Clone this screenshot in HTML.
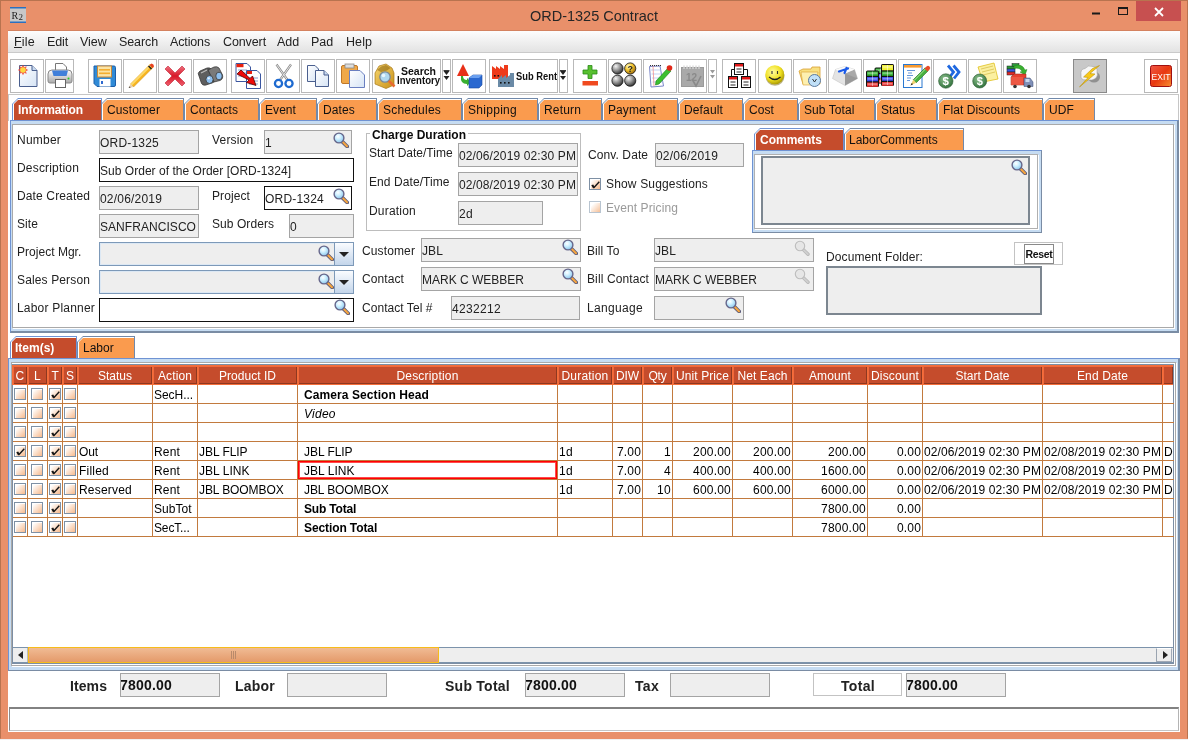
<!DOCTYPE html>
<html><head><meta charset="utf-8">
<style>
*{margin:0;padding:0;box-sizing:border-box}
html,body{width:1188px;height:740px;overflow:hidden;background:#f0f0f0}
body{position:relative;font-family:"Liberation Sans",sans-serif;font-size:12px;color:#222}
div,span{position:absolute}
.win{left:0;top:0;width:1188px;height:739px;background:#e9906a;border:1px solid #b8734f;border-bottom-color:#e9906a}
.title{left:0;top:8px;width:1188px;text-align:center;font-size:14.5px;color:#262626;white-space:nowrap}
.menubar{left:8px;top:30px;width:1172px;height:23px;background:linear-gradient(#fdfdfd,#e3e3e3);border-top:1px solid #d4825f;border-bottom:1px solid #cacaca}
.menu{top:35px;font-size:12.5px;color:#222;white-space:nowrap}
.tb{top:59px;height:34px;border:1px solid #b9b9b9;background:#fff}
.tb svg{position:absolute;left:0;top:0}
.tab{top:98px;height:22px;background:#7189aa;clip-path:polygon(0 6px,6px 0,100% 0,100% 100%,0 100%)}
.tab .i{left:1px;top:1px;right:1px;bottom:0;background:#fff;clip-path:polygon(0 5px,5px 0,100% 0,100% 100%,0 100%)}
.tab .f{left:1px;top:1px;right:0;bottom:0;background:#fa9b4e;clip-path:polygon(0 4px,4px 0,100% 0,100% 100%,0 100%)}
.tab .t{left:4px;top:5px;font-size:12px;color:#111;white-space:nowrap}
.tab.sel{background:#6f93d3}
.tab.sel .f{background:#c54c2c}
.tab.sel .t{color:#fff;font-weight:bold}
.lbl{font-size:12px;color:#222;white-space:nowrap}
.fld{height:24px;background:#eee;border:1px solid #a4a4a4;font-size:12px;color:#222;white-space:nowrap;overflow:hidden}
.fld span{left:0px;top:5px}
.fld.w{background:#fff;border:1px solid #111}
.hl{background:#fff}
.th{top:365px;height:20px;border:1px solid #f46d3a;border-right:none;box-shadow:inset 1px 1px 0 #f0683a,inset -1px -1px 0 #8e3820;background:#c54c2c;color:#fff;font-size:12px;text-align:center;white-space:nowrap;overflow:hidden}
.th span{position:static;display:block;margin-top:3px}
.td{font-size:12px;color:#000;white-space:nowrap}
.cbx{width:12px;height:12px;border:1px solid #7e90a4;background:linear-gradient(135deg,#fff 15%,#f7b98c 100%);box-shadow:inset 1px 1px 0 #fff}
.cbx i{position:absolute;left:1px;top:1px;width:9px;height:9px}
.blbl{font-size:14px;font-weight:bold;color:#222;white-space:nowrap}
</style></head><body>
<div id="root" style="left:0;top:0;width:1188px;height:740px;overflow:hidden;will-change:transform">
<div class="win"></div>
<div class="title">ORD-1325 Contract</div>
<div style="left:8px;top:30px;width:1172px;height:702px;background:#fff"></div>
<div class="menubar"></div>
<span class="menu" style="left:14px;letter-spacing:0.215px;"><u>F</u>ile</span>
<span class="menu" style="left:47px;letter-spacing:-0.135px;">Edit</span>
<span class="menu" style="left:80px;letter-spacing:-0.023px;">View</span>
<span class="menu" style="left:119px;letter-spacing:-0.101px;">Search</span>
<span class="menu" style="left:170px;letter-spacing:-0.142px;">Actions</span>
<span class="menu" style="left:223px;letter-spacing:-0.110px;">Convert</span>
<span class="menu" style="left:277px;letter-spacing:-0.080px;">Add</span>
<span class="menu" style="left:311px;letter-spacing:-0.080px;">Pad</span>
<span class="menu" style="left:346px;letter-spacing:0.073px;">Help</span>
<div class="tb" id="tb0" style="left:10px;width:34px;"></div>
<div class="tb" id="tb1" style="left:45px;width:29px;"></div>
<div class="tb" id="tb2" style="left:88px;width:34px;"></div>
<div class="tb" id="tb3" style="left:123px;width:34px;"></div>
<div class="tb" id="tb4" style="left:158px;width:34px;"></div>
<div class="tb" id="tb5" style="left:193px;width:34px;"></div>
<div class="tb" id="tb6" style="left:231px;width:34px;"></div>
<div class="tb" id="tb7" style="left:266px;width:34px;"></div>
<div class="tb" id="tb8" style="left:301px;width:34px;"></div>
<div class="tb" id="tb9" style="left:336px;width:34px;"></div>
<div class="tb" id="tb10" style="left:372px;width:69px;"></div>
<div class="tb" id="tb11" style="left:442px;width:9px;"></div>
<div class="tb" id="tb12" style="left:452px;width:34px;"></div>
<div class="tb" id="tb13" style="left:489px;width:69px;"></div>
<div class="tb" id="tb14" style="left:559px;width:9px;"></div>
<div class="tb" id="tb15" style="left:573px;width:34px;"></div>
<div class="tb" id="tb16" style="left:608px;width:34px;"></div>
<div class="tb" id="tb17" style="left:643px;width:34px;"></div>
<div class="tb" id="tb18" style="left:678px;width:29px;"></div>
<div class="tb" id="tb19" style="left:708px;width:9px;"></div>
<div class="tb" id="tb20" style="left:722px;width:34px;"></div>
<div class="tb" id="tb21" style="left:758px;width:34px;"></div>
<div class="tb" id="tb22" style="left:793px;width:34px;"></div>
<div class="tb" id="tb23" style="left:828px;width:34px;"></div>
<div class="tb" id="tb24" style="left:863px;width:34px;"></div>
<div class="tb" id="tb25" style="left:898px;width:34px;"></div>
<div class="tb" id="tb26" style="left:933px;width:34px;"></div>
<div class="tb" id="tb27" style="left:968px;width:34px;"></div>
<div class="tb" id="tb28" style="left:1003px;width:34px;"></div>
<div class="tb" id="tb29" style="left:1073px;width:34px;background:#c8c8c8;border-color:#8a8a8a"></div>
<div class="tb" id="tb30" style="left:1144px;width:34px;"></div>

<svg width="1188" height="100" style="position:absolute;left:0;top:0">
<defs>
 <linearGradient id="gdoc" x1="0" y1="0" x2="1" y2="1"><stop offset="0" stop-color="#fff"/><stop offset="1" stop-color="#d6e4f5"/></linearGradient>
 <radialGradient id="gball" cx="0.35" cy="0.3" r="0.7"><stop offset="0" stop-color="#f4f4f4"/><stop offset="0.5" stop-color="#9a9a9a"/><stop offset="1" stop-color="#3a3a3a"/></radialGradient>
 <radialGradient id="gyball" cx="0.35" cy="0.3" r="0.7"><stop offset="0" stop-color="#fff8c0"/><stop offset="0.5" stop-color="#f5c830"/><stop offset="1" stop-color="#a07010"/></radialGradient>
 <radialGradient id="gsmile" cx="0.4" cy="0.35" r="0.7"><stop offset="0" stop-color="#fffca0"/><stop offset="0.6" stop-color="#f0e020"/><stop offset="1" stop-color="#a09000"/></radialGradient>
 <linearGradient id="gx" x1="0" y1="0" x2="0" y2="1"><stop offset="0" stop-color="#f07080"/><stop offset="0.5" stop-color="#d81828"/><stop offset="1" stop-color="#f06070"/></linearGradient>
 <linearGradient id="gprn" x1="0" y1="0" x2="0" y2="1"><stop offset="0" stop-color="#fff"/><stop offset="1" stop-color="#a8a8a8"/></linearGradient>
 <linearGradient id="gexit" x1="0" y1="0" x2="1" y2="1"><stop offset="0" stop-color="#f05848"/><stop offset="0.5" stop-color="#e83810"/><stop offset="1" stop-color="#f89030"/></linearGradient>
 <linearGradient id="gbox" x1="0" y1="0" x2="1" y2="1"><stop offset="0" stop-color="#f8d870"/><stop offset="1" stop-color="#c89018"/></linearGradient>
 <linearGradient id="gkey" x1="0" y1="0" x2="0" y2="1"><stop offset="0" stop-color="#fff"/><stop offset="1" stop-color="#b8b8b8"/></linearGradient>
 <radialGradient id="gcoin" cx="0.4" cy="0.35" r="0.7"><stop offset="0" stop-color="#8cc08c"/><stop offset="1" stop-color="#2e6e3a"/></radialGradient>
</defs>
<!-- 1 new doc -->
<path d="M19.5 65.5H32L37 70.5V86.5H19.5Z" fill="url(#gdoc)" stroke="#4a5f8e"/>
<path d="M32 65.5V70.5H37" fill="#c8daf0" stroke="#4a5f8e"/>
<polygon points="28.20,70.00 25.96,71.22 26.68,73.68 24.22,72.96 23.00,75.20 21.78,72.96 19.32,73.68 20.04,71.22 17.80,70.00 20.04,68.78 19.32,66.32 21.78,67.04 23.00,64.80 24.22,67.04 26.68,66.32 25.96,68.78" fill="#f04030" opacity="0.85"/>
<circle cx="23" cy="70" r="2.8" fill="#fcd840"/>
<!-- 2 printer -->
<path d="M55.5 63.5H63L66.5 67V75H55.5Z" fill="#fff" stroke="#777"/>
<path d="M48 74Q48 70 52 70H68Q72 70 72 74V81Q72 83 70 83H50Q48 83 48 81Z" fill="url(#gprn)" stroke="#888"/>
<path d="M52 70.5H68L66.5 76H53.5Z" fill="#3f7fda"/>
<rect x="55.5" y="79.5" width="10" height="8" fill="#fff" stroke="#666"/>
<circle cx="68.5" cy="78.5" r="1" fill="#2c2"/>
<!-- 3 floppy -->
<path d="M94 66H114Q115.5 66 115.5 67.5V85Q115.5 86.5 114 86.5H97L94 83.5Z" fill="#2f8ad6" stroke="#1d5ea8"/>
<rect x="97.5" y="66" width="14" height="11" fill="#fbe4a6" stroke="#c8893a"/>
<rect x="99" y="69" width="11" height="1.6" fill="#f4ae30"/><rect x="99" y="72.5" width="11" height="1.6" fill="#f4ae30"/>
<rect x="99.5" y="79" width="11" height="7.5" fill="#fff"/>
<rect x="101" y="81" width="2" height="3" fill="#2f6ad0"/>
<!-- 4 pencil -->
<path d="M150 64.5L153 67.5L133.5 87L130.5 84Z" fill="#f7b41e" stroke="#d08a10" stroke-width="0.5"/>
<path d="M150 64.5L151.5 66L132 85.5L130.5 84Z" fill="#fcd868"/>
<path d="M130.5 84L133.5 87L128.6 88Z" fill="#e8d0b0"/>
<path d="M129.8 86.2L128.6 88L130.6 87.4Z" fill="#333"/>
<path d="M148.5 66L151.5 69" stroke="#222" stroke-width="1.6"/>
<path d="M149.5 65L152.5 68L154 66.5Q154 64 151.5 63.5Z" fill="#e84020"/>
<!-- 5 red X -->
<path d="M168 66L175 73L182 66L185 69L178 76L185 83L182 86L175 79L168 86L165 83L172 76L165 69Z" fill="url(#gx)" stroke="#c02030" stroke-width="0.6"/>
<!-- 6 binoculars -->
<path d="M199 76Q197 73 200 71L207 68Q210 67 212 70L215 78Q216 82 212 83L206 85Q202 86 201 82Z" fill="#5e5e5e" stroke="#2e2e2e" stroke-width="0.7"/>
<path d="M208 70L214 67Q217 66 219 68L222.5 75Q223.5 79 220 80.5L214 82Z" fill="#7a7a7a" stroke="#2e2e2e" stroke-width="0.7"/>
<path d="M201 73L207 70" stroke="#bbb" stroke-width="1.2"/>
<ellipse cx="209.5" cy="79.5" rx="3.6" ry="4" fill="#8ec0f0" stroke="#3a3a3a" stroke-width="0.8"/>
<ellipse cx="219" cy="76" rx="3.2" ry="3.8" fill="#8ec0f0" stroke="#3a3a3a" stroke-width="0.8"/>
<ellipse cx="208.7" cy="78.3" rx="1.3" ry="1.1" fill="#e0f0ff"/>
<!-- 7 copy arrow -->
<path d="M236 63.5H247L250.5 67V81.5H236Z" fill="#fff" stroke="#3a56a0"/>
<rect x="236.5" y="64" width="7" height="3.2" fill="#e82010"/>
<path d="M238 70H247M238 73H247M238 76H247" stroke="#7a90c8" stroke-width="0.8"/>
<path d="M246.5 70.5H257L260.5 74V88.5H246.5Z" fill="#fff" stroke="#3a56a0"/>
<rect x="247" y="71" width="5" height="3" fill="#e82010"/>
<path d="M249 78H258M249 81H258M249 84H258" stroke="#6a86c0" stroke-width="0.8"/>
<path d="M237 74L241 70L250 78.5L252.5 76L256 85.5L246.5 82.5L249 80Z" fill="#ee0a0a" stroke="#500" stroke-width="0.8"/>
<!-- 8 scissors -->
<path d="M276.5 64.5L287.5 80M291 64.5L280 80" stroke="#8a8a8a" stroke-width="2.2"/>
<path d="M276.5 64.5L287.5 80M291 64.5L280 80" stroke="#e8e8e8" stroke-width="1"/>
<circle cx="278.5" cy="83.5" r="3.6" fill="none" stroke="#1e6ad0" stroke-width="2.3"/>
<circle cx="289" cy="83.5" r="3.6" fill="none" stroke="#1e6ad0" stroke-width="2.3"/>
<!-- 9 copy -->
<path d="M307.5 65.5H315L318.5 69V81.5H307.5Z" fill="url(#gdoc)" stroke="#4a5f8e"/>
<path d="M315.5 70.5H324L328.5 75V86.5H315.5Z" fill="url(#gdoc)" stroke="#4a5f8e"/>
<path d="M324 70.5V75H328.5" fill="#c8daf0" stroke="#4a5f8e"/>
<!-- 10 paste -->
<rect x="341.5" y="65.5" width="16" height="18" rx="1.5" fill="#f0a848" stroke="#c07828"/>
<rect x="345" y="64" width="9" height="4" fill="#ddd" stroke="#888" stroke-width="0.8"/>
<path d="M349.5 70.5H360L364.5 75V87.5H349.5Z" fill="url(#gdoc)" stroke="#6a7fc0"/>
<!-- 11 search inventory -->
<path d="M375 73L379 66L386 64L392 68L394 73V85L386 88.5L375 84Z" fill="url(#gbox)" stroke="#a87818" stroke-width="0.7"/>
<path d="M377 70L381 66.5L386 65L390.5 68L387 70.5L381 72Z" fill="#8a6410" opacity="0.55"/>
<circle cx="385" cy="77" r="5.2" fill="#b0d8f0" stroke="#7a8898" stroke-width="1.3"/>
<circle cx="383.5" cy="75.5" r="1.8" fill="#e8f6ff"/>
<path d="M388.8 80.8L394.5 86.5" stroke="#e86a30" stroke-width="2.6"/>
<text x="418.5" y="75" font-family="Liberation Sans" font-weight="bold" font-size="10.5" text-anchor="middle" fill="#111">Search</text>
<text x="418.5" y="83.5" font-family="Liberation Sans" font-weight="bold" font-size="10.5" text-anchor="middle" fill="#111" textLength="43" lengthAdjust="spacingAndGlyphs">Inventory</text>
<!-- drop arrows -->
<path d="M443.5 71H449.5L446.5 75Z M443.5 76H449.5L446.5 80Z" fill="#222"/><path d="M443.5 70.5H449.5" stroke="#222" stroke-width="0.9"/>
<!-- 12 shapes -->
<path d="M463 64L469 76H457Z" fill="#e83018"/>
<path d="M461 76Q460 84 467 84L467 86L471 82L467 78L467 80Q463 80 463 76Z" fill="#3ab030"/>
<path d="M469 78L473 75H482V85L479 88H469Z" fill="#2a68d0" stroke="#1a48a0" stroke-width="0.6"/>
<path d="M469 78L473 75H482L479 78Z" fill="#6aa0f0"/>
<!-- 13 sub rent -->
<path d="M492 66L496 69V66L500 69V66L504 69V65L508 65V79H492Z" fill="#ee3a1a"/>
<path d="M498 79L502 75V78L506 75V78L510 75V73L514 73V87H498Z" fill="#6a8aa6"/>
<rect x="500" y="82" width="1.6" height="1.6" fill="#111"/><rect x="504" y="82" width="1.6" height="1.6" fill="#111"/><rect x="508" y="82" width="1.6" height="1.6" fill="#111"/>
<rect x="494" y="75" width="1.6" height="1.6" fill="#111"/><rect x="497.5" y="75" width="1.6" height="1.6" fill="#111"/>
<text x="516" y="80" font-family="Liberation Sans" font-weight="bold" font-size="11.5" fill="#111" textLength="41" lengthAdjust="spacingAndGlyphs">Sub Rent</text>
<path d="M560 71H566L563 75Z M560 76H566L563 80Z" fill="#222"/><path d="M560 70.5H566" stroke="#222" stroke-width="0.9"/>
<!-- 14 plus minus -->
<path d="M588 65.5H592V70H597V74H592V78.5H588V74H583V70H588Z" fill="#58c030" stroke="#2a8a18" stroke-width="0.8"/>
<rect x="582.5" y="81" width="15.5" height="4.5" fill="#f04a20"/>
<!-- 15 balls -->
<circle cx="617.5" cy="68.5" r="5.6" fill="url(#gball)" stroke="#111" stroke-width="0.8"/>
<circle cx="630.2" cy="68.5" r="5.6" fill="url(#gyball)" stroke="#111" stroke-width="0.8"/>
<text x="630.2" y="72" font-family="Liberation Sans" font-weight="bold" font-size="9" text-anchor="middle" fill="#222">?</text>
<circle cx="617.5" cy="80.7" r="5.6" fill="url(#gball)" stroke="#111" stroke-width="0.8"/>
<circle cx="630.2" cy="80.7" r="5.6" fill="url(#gball)" stroke="#111" stroke-width="0.8"/>
<!-- 16 notepad -->
<path d="M649.5 66.5L660 66L663.5 86L651 87Z" fill="#fff" stroke="#7a86c8"/>
<path d="M651 70H661M651.5 74H662M652 78H662M652.5 82H663" stroke="#a8c0f0" stroke-width="0.7"/>
<path d="M653 66L654 86" stroke="#f08080" stroke-width="0.7"/>
<path d="M650 65.5H661" stroke="#333" stroke-width="1.2" stroke-dasharray="1 1"/>
<path d="M656 81L668 68L671 71L659 84L655.5 85Z" fill="#3cc030" stroke="#1a7a18" stroke-width="0.6"/>
<circle cx="669.5" cy="68" r="2.8" fill="#e02818"/>
<!-- 17 calendar disabled -->
<rect x="681.5" y="67.5" width="22" height="19" fill="#a9a9a9" stroke="#9a9a9a"/>
<path d="M684 65.5V69M687 65.5V69M690 65.5V69M693 65.5V69M696 65.5V69M699 65.5V69" stroke="#d8d8d8" stroke-width="1.3"/>
<text x="686" y="81" font-family="Liberation Sans" font-weight="bold" font-size="10" fill="#8a8a8a">12</text>
<path d="M692 79L696 86L701 76" stroke="#8a8a8a" stroke-width="1.6" fill="none"/>
<path d="M710 70H715L712.5 73.5Z M710 75H715L712.5 78.5Z" fill="#9a9a9a"/>
<!-- 18 hierarchy -->
<path d="M731.5 76V69.5H747.5V76" fill="none" stroke="#111" stroke-width="1"/>
<rect x="734.5" y="63.5" width="9" height="11" fill="#fff" stroke="#111"/><rect x="735" y="64" width="8" height="2.5" fill="#e01818"/>
<path d="M736.5 69H741.5M736.5 72H741.5" stroke="#111" stroke-width="0.9"/>
<rect x="728.5" y="76.5" width="9" height="11" fill="#fff" stroke="#111"/><rect x="729" y="77" width="8" height="2.5" fill="#e01818"/>
<path d="M730.5 82H735.5M730.5 85H735.5" stroke="#111" stroke-width="0.9"/>
<rect x="741.5" y="76.5" width="9" height="11" fill="#fff" stroke="#111"/><rect x="742" y="77" width="8" height="2.5" fill="#e01818"/>
<path d="M743.5 82H748.5M743.5 85H748.5" stroke="#111" stroke-width="0.9"/>
<!-- 19 smiley -->
<ellipse cx="775" cy="76" rx="9.5" ry="9.8" fill="#7a6a10" opacity="0.5"/>
<circle cx="774.8" cy="74.8" r="9.5" fill="url(#gsmile)"/>
<path d="M772 71V74M777.5 71V74" stroke="#333" stroke-width="1.1"/>
<path d="M769 77Q774.8 82 780.5 77" stroke="#222" stroke-width="1.3" fill="none"/>
<!-- 20 folder clock -->
<path d="M799 71L803 69H811L812 67H820V84H803Z" fill="#f8e080" stroke="#d8a030" stroke-width="0.8"/>
<path d="M801 72H818L816 85H803Z" fill="#fdf0b0" stroke="#d8a030" stroke-width="0.6"/>
<circle cx="814.5" cy="80.5" r="6" fill="#c0e0f8" stroke="#5a7aa0"/>
<path d="M812.5 79L814.5 82L816.5 79" stroke="#222" stroke-width="0.9" fill="none"/>
<!-- 21 key A -->
<path d="M835.5 69.5L845 66.5L854.5 69.5L857.5 78.5L845 85.5L832.5 78.5Z" fill="#e4e4e4" stroke="#c4c4c4" stroke-width="0.6"/>
<path d="M845 73.5L854.5 69.5L857.5 78.5L845 85.5Z" fill="#a9a9a9"/>
<path d="M845 73.5L857.5 78.5L845 85.5Z" fill="#8a8a8a" opacity="0.5"/>
<path d="M835.5 69.5L845 66.5L854.5 69.5L845 73.5Z" fill="#fbfbfb"/>
<path d="M839 71.5L848 68.5M846.5 68L844.5 73" stroke="#1a5ae8" stroke-width="2.2" stroke-linecap="round"/>
<!-- 22 blocks -->
<rect x="874.5" y="67.5" width="12" height="16.0" rx="1.5" fill="#111"/>
<rect x="875.5" y="68.5" width="10" height="4.3" fill="#30b030"/>
<rect x="876.0" y="69.3" width="9" height="1.9545454545454544" fill="#fff" opacity="0.35"/>
<rect x="875.5" y="74.0" width="10" height="4.3" fill="#3a4af0"/>
<rect x="876.0" y="74.8" width="9" height="1.9545454545454544" fill="#fff" opacity="0.35"/>
<rect x="875.5" y="79.5" width="10" height="3.8" fill="#e83030"/>
<rect x="876.0" y="80.3" width="9" height="1.727272727272727" fill="#fff" opacity="0.35"/>
<rect x="880.1" y="68.5" width="0.9" height="14.0" fill="#fff" opacity="0.5"/>
<rect x="866" y="70.5" width="13" height="16.5" rx="1.5" fill="#111"/>
<rect x="867" y="71.5" width="11" height="4.3" fill="#30b030"/>
<rect x="867.5" y="72.3" width="10" height="1.9545454545454544" fill="#fff" opacity="0.35"/>
<rect x="867" y="77.0" width="11" height="4.3" fill="#3a4af0"/>
<rect x="867.5" y="77.8" width="10" height="1.9545454545454544" fill="#fff" opacity="0.35"/>
<rect x="867" y="82.5" width="11" height="4.3" fill="#e83030"/>
<rect x="867.5" y="83.3" width="10" height="1.9545454545454544" fill="#fff" opacity="0.35"/>
<rect x="872.1" y="71.5" width="0.9" height="14.5" fill="#fff" opacity="0.5"/>
<rect x="881" y="64" width="13" height="22.0" rx="1.5" fill="#111"/>
<rect x="882" y="65" width="11" height="5.3" fill="#f0f030"/>
<rect x="882.5" y="65.8" width="10" height="2.4090909090909087" fill="#fff" opacity="0.35"/>
<rect x="882" y="71.5" width="11" height="4.3" fill="#30b030"/>
<rect x="882.5" y="72.3" width="10" height="1.9545454545454544" fill="#fff" opacity="0.35"/>
<rect x="882" y="77.0" width="11" height="3.8" fill="#3a4af0"/>
<rect x="882.5" y="77.8" width="10" height="1.727272727272727" fill="#fff" opacity="0.35"/>
<rect x="882" y="82.0" width="11" height="3.8" fill="#e83030"/>
<rect x="882.5" y="82.8" width="10" height="1.727272727272727" fill="#fff" opacity="0.35"/>
<rect x="887.1" y="65" width="0.9" height="20.0" fill="#fff" opacity="0.5"/>
<!-- 23 notepad pencil -->
<rect x="903.5" y="64.5" width="18.5" height="23" fill="#fff" stroke="#2a78d0"/>
<rect x="904" y="65" width="17.5" height="2.6" fill="#f89a30"/>
<path d="M907 70.5H915M908 73H912M907 75.5H913M907 78H911M907 80.5H910" stroke="#2a6ac8" stroke-width="0.7"/>
<path d="M913.2 79.8L925.2 67.8L928.2 70.8L916.2 82.8Z" fill="#48b040" stroke="#207018" stroke-width="0.6"/>
<path d="M914 80.6L925.8 68.6" stroke="#a8e898" stroke-width="1"/>
<path d="M924.5 68.5L926.5 66.5Q928 65 929.5 66.5Q931 68 929.5 69.5L927.5 71.5Z" fill="#e84a28"/>
<path d="M913.2 79.8L916.2 82.8L910.5 85.5Z" fill="#f0d070"/>
<path d="M911.8 83L910.5 85.5L913 84.2Z" fill="#222"/>
<!-- 24 dollar arrows -->
<path d="M948 65.5L953.5 72L948.5 78.5M953.5 65.5L959 72L954 78.5" stroke="#1e68e0" stroke-width="2.8" fill="none"/>
<circle cx="945.8" cy="81" r="7.2" fill="url(#gcoin)" stroke="#2a5a30" stroke-width="0.6"/>
<text x="945.8" y="85.2" font-family="Liberation Sans" font-weight="bold" font-size="11.5" text-anchor="middle" fill="#fff">$</text>
<!-- 25 dollar note -->
<path d="M978 67L994 63L998 79L983 82Z" fill="#fbf0a0" stroke="#e0c020" stroke-width="0.8"/>
<path d="M981 69L993 66M982 72L994 69M983 75L995 72" stroke="#d8c050" stroke-width="0.8"/>
<circle cx="979.7" cy="81" r="7" fill="url(#gcoin)" stroke="#2a5a30" stroke-width="0.6"/>
<text x="979.7" y="85" font-family="Liberation Sans" font-weight="bold" font-size="11" text-anchor="middle" fill="#fff">$</text>
<!-- 26 truck -->
<g stroke="#222" stroke-width="0.5">
<rect x="1007" y="66" width="8" height="3" fill="#2a9a3a"/><rect x="1007" y="69" width="8" height="3" fill="#3a5ae0"/><rect x="1007" y="72" width="8" height="3" fill="#e02a2a"/>
<rect x="1012" y="63.5" width="7" height="3" fill="#2a9a3a"/>
</g>
<path d="M1014 66Q1022 63 1025 70L1027 69.5L1025 75L1020 72L1022 71.5Q1020 67 1014 68.5Z" fill="#3ab030" stroke="#1a7a18" stroke-width="0.4"/>
<path d="M1011 77L1014 74H1026V85H1011Z" fill="#e84030" stroke="#902010" stroke-width="0.5"/>
<path d="M1011 77H1023V85H1011Z" fill="#f06850" opacity="0.6"/>
<path d="M1024 78H1030L1033 82V86.5H1024Z" fill="#8090b8" stroke="#3a4a70" stroke-width="0.5"/>
<rect x="1025.5" y="79" width="4" height="3" fill="#c8d8f0"/>
<circle cx="1015" cy="86.5" r="1.8" fill="#333"/><circle cx="1029" cy="86.5" r="1.8" fill="#333"/>
<!-- 27 lightning -->
<ellipse cx="1094" cy="77" rx="6" ry="5.5" fill="#909090"/>
<path d="M1081 75Q1080 69 1085 68.5Q1088 64.5 1093 66.5Q1098 67 1097 72Q1099 78 1092 80L1086 80Q1080 80 1081 75Z" fill="#f6f6f6" stroke="#a0a0a0" stroke-width="0.6"/>
<path d="M1099.5 65.5L1090 73.5L1095 74L1079.5 87L1088 77.5L1083.5 77L1092.5 68.5Z" fill="#f8c818" stroke="#b08800" stroke-width="0.5"/>
<!-- 28 exit -->
<rect x="1150.5" y="65.5" width="21" height="21" rx="2" fill="url(#gexit)" stroke="#a01010"/>
<text x="1161" y="80" font-family="Liberation Sans" font-size="9" text-anchor="middle" fill="#fff" textLength="19" lengthAdjust="spacingAndGlyphs">EXIT</text>
</svg>
<div style="left:8px;top:94px;width:1171px;height:27px;border:1px solid #c6c6c6;border-bottom:none"></div>
<div style="left:10px;top:120px;width:1169px;height:213px;background:#c6dcf2;border:1px solid #6f93d3;border-right:2px solid #7a8ca4;border-bottom:2px solid #7a8ca4"></div>
<div style="left:12px;top:124px;width:1162px;height:204px;background:#fff;border:1px solid #a9a9a9;box-shadow:1px 1px 0 #fff"></div>
<div class="tab sel" style="left:12px;width:90px"><div class="i"><div class="f"></div></div><span class="t" style="left:6px;letter-spacing:-0.090px;">Information</span></div>
<div class="tab" style="left:101px;width:83px"><div class="i"><div class="f"></div></div><span class="t" style="left:6px;letter-spacing:0.123px;">Customer</span></div>
<div class="tab" style="left:184px;width:75px"><div class="i"><div class="f"></div></div><span class="t" style="left:6px;letter-spacing:0.081px;">Contacts</span></div>
<div class="tab" style="left:259px;width:58px"><div class="i"><div class="f"></div></div><span class="t" style="left:6px;letter-spacing:0.063px;">Event</span></div>
<div class="tab" style="left:317px;width:60px"><div class="i"><div class="f"></div></div><span class="t" style="left:6px;letter-spacing:0.130px;">Dates</span></div>
<div class="tab" style="left:377px;width:85px"><div class="i"><div class="f"></div></div><span class="t" style="left:6px;letter-spacing:0.218px;">Schedules</span></div>
<div class="tab" style="left:462px;width:76px"><div class="i"><div class="f"></div></div><span class="t" style="left:6px;letter-spacing:0.287px;">Shipping</span></div>
<div class="tab" style="left:538px;width:64px"><div class="i"><div class="f"></div></div><span class="t" style="left:6px;letter-spacing:0.164px;">Return</span></div>
<div class="tab" style="left:602px;width:76px"><div class="i"><div class="f"></div></div><span class="t" style="left:6px;letter-spacing:0.092px;">Payment</span></div>
<div class="tab" style="left:678px;width:65px"><div class="i"><div class="f"></div></div><span class="t" style="left:6px;letter-spacing:0.140px;">Default</span></div>
<div class="tab" style="left:743px;width:55px"><div class="i"><div class="f"></div></div><span class="t" style="left:6px;letter-spacing:0.082px;">Cost</span></div>
<div class="tab" style="left:798px;width:77px"><div class="i"><div class="f"></div></div><span class="t" style="left:6px;letter-spacing:0.071px;">Sub Total</span></div>
<div class="tab" style="left:875px;width:62px"><div class="i"><div class="f"></div></div><span class="t" style="left:6px;letter-spacing:-0.003px;">Status</span></div>
<div class="tab" style="left:937px;width:106px"><div class="i"><div class="f"></div></div><span class="t" style="left:6px;letter-spacing:0.070px;">Flat Discounts</span></div>
<div class="tab" style="left:1043px;width:52px"><div class="i"><div class="f"></div></div><span class="t" style="left:6px;letter-spacing:0.113px;">UDF</span></div>
<span class="lbl" style="left:17px;top:133px;letter-spacing:0.220px;">Number</span>
<div class="fld " style="left:99px;top:130px;width:100px;height:24px;"><span style="letter-spacing:0.205px;">ORD-1325</span></div>
<span class="lbl" style="left:212px;top:133px;letter-spacing:0.188px;">Version</span>
<div class="fld " style="left:264px;top:130px;width:88px;height:24px;"><span style="letter-spacing:0.326px;">1</span></div>
<span class="lbl" style="left:17px;top:161px;letter-spacing:0.180px;">Description</span>
<div class="fld w" style="left:99px;top:158px;width:255px;height:24px;"><span style="letter-spacing:0.028px;">Sub Order of the Order [ORD-1324]</span></div>
<span class="lbl" style="left:17px;top:189px;letter-spacing:0.136px;">Date Created</span>
<div class="fld " style="left:99px;top:186px;width:100px;height:24px;"><span style="letter-spacing:0.194px;">02/06/2019</span></div>
<span class="lbl" style="left:212px;top:189px;letter-spacing:0.093px;">Project</span>
<div class="fld w" style="left:264px;top:186px;width:88px;height:24px;"><span style="letter-spacing:0.205px;">ORD-1324</span></div>
<span class="lbl" style="left:17px;top:217px;letter-spacing:0.081px;">Site</span>
<div class="fld " style="left:99px;top:214px;width:100px;height:24px;"><span style="letter-spacing:0.055px;">SANFRANCISCO</span></div>
<span class="lbl" style="left:212px;top:217px;letter-spacing:0.064px;">Sub Orders</span>
<div class="fld " style="left:289px;top:214px;width:65px;height:24px;"><span style="letter-spacing:0.326px;">0</span></div>
<span class="lbl" style="left:17px;top:245px;letter-spacing:0.027px;">Project Mgr.</span>
<div class="fld cb" style="left:99px;top:242px;width:255px;height:24px;"><span style="letter-spacing:0.000px;"></span></div>
<span class="lbl" style="left:17px;top:273px;letter-spacing:0.136px;">Sales Person</span>
<div class="fld cb" style="left:99px;top:270px;width:255px;height:24px;"><span style="letter-spacing:0.000px;"></span></div>
<span class="lbl" style="left:17px;top:301px;letter-spacing:0.201px;">Labor Planner</span>
<div class="fld w" style="left:99px;top:298px;width:255px;height:24px;"><span style="letter-spacing:0.000px;"></span></div>
<div style="left:366px;top:133px;width:215px;height:98px;border:1px solid #bdbdbd"></div>
<span class="lbl" style="left:370px;top:128px;font-weight:bold;color:#0a0a0a;background:#fff;padding:0 2px;letter-spacing:-0.001px;">Charge Duration</span>
<span class="lbl" style="left:369px;top:146px;letter-spacing:-0.002px;">Start Date/Time</span>
<div class="fld " style="left:458px;top:143px;width:120px;height:24px;"><span style="letter-spacing:0.118px;">02/06/2019 02:30 PM</span></div>
<span class="lbl" style="left:369px;top:175px;letter-spacing:0.074px;">End Date/Time</span>
<div class="fld " style="left:458px;top:172px;width:120px;height:24px;"><span style="letter-spacing:0.118px;">02/08/2019 02:30 PM</span></div>
<span class="lbl" style="left:369px;top:204px;letter-spacing:0.205px;">Duration</span>
<div class="fld " style="left:458px;top:201px;width:85px;height:24px;"><span style="letter-spacing:0.326px;">2d</span></div>
<span class="lbl" style="left:588px;top:148px;letter-spacing:0.097px;">Conv. Date</span>
<div class="fld " style="left:655px;top:143px;width:89px;height:24px;"><span style="letter-spacing:0.194px;">02/06/2019</span></div>
<span class="lbl" style="left:606px;top:177px;letter-spacing:0.163px;">Show Suggestions</span>
<span class="lbl" style="left:606px;top:201px;letter-spacing:0.100px;color:#9a9a9a">Event Pricing</span>
<span class="lbl" style="left:362px;top:244px;letter-spacing:0.123px;">Customer</span>
<div class="fld " style="left:421px;top:238px;width:160px;height:24px;"><span style="letter-spacing:0.107px;">JBL</span></div>
<span class="lbl" style="left:362px;top:272px;letter-spacing:0.092px;">Contact</span>
<div class="fld " style="left:421px;top:267px;width:160px;height:24px;"><span style="letter-spacing:-0.001px;">MARK C WEBBER</span></div>
<span class="lbl" style="left:362px;top:301px;letter-spacing:0.049px;">Contact Tel #</span>
<div class="fld " style="left:451px;top:296px;width:129px;height:24px;"><span style="letter-spacing:0.326px;">4232212</span></div>
<span class="lbl" style="left:587px;top:244px;letter-spacing:0.094px;">Bill To</span>
<div class="fld " style="left:654px;top:238px;width:160px;height:24px;"><span style="letter-spacing:0.107px;">JBL</span></div>
<span class="lbl" style="left:587px;top:272px;letter-spacing:0.109px;">Bill Contact</span>
<div class="fld " style="left:654px;top:267px;width:160px;height:24px;"><span style="letter-spacing:-0.001px;">MARK C WEBBER</span></div>
<span class="lbl" style="left:587px;top:301px;letter-spacing:0.326px;">Language</span>
<div class="fld " style="left:654px;top:296px;width:90px;height:24px;"><span style="letter-spacing:0.000px;"></span></div>
<span class="lbl" style="left:826px;top:250px;letter-spacing:0.102px;">Document Folder:</span>
<div style="left:826px;top:266px;width:216px;height:49px;background:#eee;border:2px solid #7c8690"></div>
<div style="left:1014px;top:242px;width:49px;height:23px;border:1px solid #c3c3c3"></div>
<div style="left:1024px;top:244px;width:30px;height:20px;border:1px solid #8a8a8a;background:#fff;font-size:10.5px;font-weight:bold;color:#111"><span style="left:0;top:3px;width:28px;text-align:center;letter-spacing:-0.3px">Reset</span></div>
<div style="left:752px;top:150px;width:290px;height:83px;background:#c6dcf2;border:1px solid #6f93d3;border-right-color:#7a8ca4;border-bottom-color:#7a8ca4"></div>
<div style="left:754px;top:154px;width:284px;height:75px;background:#fff;border:1px solid #b0b0b0;box-shadow:1px 1px 0 #fff"></div>
<div style="left:761px;top:156px;width:269px;height:69px;background:#eee;border:2px solid #7c8690"></div>
<div class="tab sel" style="top:128px;left:754px;width:90px;height:22px"><div class="i"><div class="f"></div></div><span class="t" style="left:6px;top:5px">Comments</span></div>
<div class="tab" style="top:128px;left:844px;width:120px;height:22px"><div class="i"><div class="f"></div></div><span class="t" style="left:5px;top:5px">LaborComments</span></div>
<div style="left:8px;top:358px;width:1172px;height:313px;background:#c6dcf2;border:1px solid #6f93d3;border-right:2px solid #7a8ca4;border-bottom:1px solid #7a8ca4"></div>
<div style="left:11px;top:362px;width:1165px;height:304px;background:#fff;border:1px solid #a9a9a9;box-shadow:1px 1px 0 #fff"></div>
<div class="tab sel" style="top:336px;left:10px;width:67px"><div class="i"><div class="f"></div></div><span class="t" style="left:5px">Item(s)</span></div>
<div class="tab" style="top:336px;left:77px;width:58px"><div class="i"><div class="f"></div></div><span class="t" style="left:6px">Labor</span></div>
<div style="left:12px;top:364px;width:1162px;height:300px;border:1px solid #7c8ea4"></div>
<div style="left:13px;top:365px;width:1160px;height:20px;background:#f46d3a"></div>
<div class="th" style="left:12px;width:15px"><span style="letter-spacing:0.334px;">C</span></div>
<div class="th" style="left:27px;width:20px"><span style="letter-spacing:0.326px;">L</span></div>
<div class="th" style="left:47px;width:15px"><span style="letter-spacing:-0.330px;">T</span></div>
<div class="th" style="left:62px;width:15px"><span style="letter-spacing:-0.004px;">S</span></div>
<div class="th" style="left:77px;width:75px"><span style="letter-spacing:-0.003px;">Status</span></div>
<div class="th" style="left:152px;width:45px"><span style="letter-spacing:0.108px;">Action</span></div>
<div class="th" style="left:197px;width:100px"><span style="letter-spacing:0.031px;">Product ID</span></div>
<div class="th" style="left:297px;width:260px"><span style="letter-spacing:0.180px;">Description</span></div>
<div class="th" style="left:557px;width:55px"><span style="letter-spacing:0.205px;">Duration</span></div>
<div class="th" style="left:612px;width:30px"><span style="letter-spacing:-0.109px;">DIW</span></div>
<div class="th" style="left:642px;width:30px"><span style="letter-spacing:-0.223px;">Qty</span></div>
<div class="th" style="left:672px;width:60px"><span style="letter-spacing:0.099px;">Unit Price</span></div>
<div class="th" style="left:732px;width:60px"><span style="letter-spacing:0.080px;">Net Each</span></div>
<div class="th" style="left:792px;width:75px"><span style="letter-spacing:0.107px;">Amount</span></div>
<div class="th" style="left:867px;width:55px"><span style="letter-spacing:0.164px;">Discount</span></div>
<div class="th" style="left:922px;width:120px"><span style="letter-spacing:-0.002px;">Start Date</span></div>
<div class="th" style="left:1042px;width:120px"><span style="letter-spacing:0.121px;">End Date</span></div>
<div class="th" style="left:1162px;width:11px"><span style="letter-spacing:0.000px;"></span></div>
<div style="left:13px;top:403px;width:1161px;height:1px;background:#c27a3e"></div>
<div style="left:13px;top:422px;width:1161px;height:1px;background:#c27a3e"></div>
<div style="left:13px;top:441px;width:1161px;height:1px;background:#c27a3e"></div>
<div style="left:13px;top:460px;width:1161px;height:1px;background:#c27a3e"></div>
<div style="left:13px;top:479px;width:1161px;height:1px;background:#c27a3e"></div>
<div style="left:13px;top:498px;width:1161px;height:1px;background:#c27a3e"></div>
<div style="left:13px;top:517px;width:1161px;height:1px;background:#c27a3e"></div>
<div style="left:13px;top:536px;width:1161px;height:1px;background:#c27a3e"></div>
<div style="left:27px;top:385px;width:1px;height:152px;background:#c27a3e"></div>
<div style="left:47px;top:385px;width:1px;height:152px;background:#c27a3e"></div>
<div style="left:62px;top:385px;width:1px;height:152px;background:#c27a3e"></div>
<div style="left:77px;top:385px;width:1px;height:152px;background:#c27a3e"></div>
<div style="left:152px;top:385px;width:1px;height:152px;background:#c27a3e"></div>
<div style="left:197px;top:385px;width:1px;height:152px;background:#c27a3e"></div>
<div style="left:297px;top:385px;width:1px;height:152px;background:#c27a3e"></div>
<div style="left:557px;top:385px;width:1px;height:152px;background:#c27a3e"></div>
<div style="left:612px;top:385px;width:1px;height:152px;background:#c27a3e"></div>
<div style="left:642px;top:385px;width:1px;height:152px;background:#c27a3e"></div>
<div style="left:672px;top:385px;width:1px;height:152px;background:#c27a3e"></div>
<div style="left:732px;top:385px;width:1px;height:152px;background:#c27a3e"></div>
<div style="left:792px;top:385px;width:1px;height:152px;background:#c27a3e"></div>
<div style="left:867px;top:385px;width:1px;height:152px;background:#c27a3e"></div>
<div style="left:922px;top:385px;width:1px;height:152px;background:#c27a3e"></div>
<div style="left:1042px;top:385px;width:1px;height:152px;background:#c27a3e"></div>
<div style="left:1162px;top:385px;width:1px;height:152px;background:#c27a3e"></div>
<div class="cbx" style="left:14px;top:388px"></div>
<div class="cbx" style="left:31px;top:388px"></div>
<div class="cbx" style="left:49px;top:388px"><svg width="10" height="10" style="position:absolute;left:0px;top:0px"><path d="M1.3 6.2L3.2 5.6L4.2 7.3L8.8 2.2L9.8 3.2L4.3 9.3L3 9.3Z" fill="#151515"/></svg></div>
<div class="cbx" style="left:64px;top:388px"></div>
<span class="td" style="left:154px;top:388px;letter-spacing:-0.049px;">SecH...</span>
<span class="td" style="left:304px;top:388px;font-weight:bold;letter-spacing:0.085px;">Camera Section Head</span>
<div class="cbx" style="left:14px;top:407px"></div>
<div class="cbx" style="left:31px;top:407px"></div>
<div class="cbx" style="left:49px;top:407px"><svg width="10" height="10" style="position:absolute;left:0px;top:0px"><path d="M1.3 6.2L3.2 5.6L4.2 7.3L8.8 2.2L9.8 3.2L4.3 9.3L3 9.3Z" fill="#151515"/></svg></div>
<div class="cbx" style="left:64px;top:407px"></div>
<span class="td" style="left:304px;top:407px;font-style:italic;letter-spacing:0.262px;">Video</span>
<div class="cbx" style="left:14px;top:426px"></div>
<div class="cbx" style="left:31px;top:426px"></div>
<div class="cbx" style="left:49px;top:426px"><svg width="10" height="10" style="position:absolute;left:0px;top:0px"><path d="M1.3 6.2L3.2 5.6L4.2 7.3L8.8 2.2L9.8 3.2L4.3 9.3L3 9.3Z" fill="#151515"/></svg></div>
<div class="cbx" style="left:64px;top:426px"></div>
<div class="cbx" style="left:14px;top:445px"><svg width="10" height="10" style="position:absolute;left:0px;top:0px"><path d="M1.3 6.2L3.2 5.6L4.2 7.3L8.8 2.2L9.8 3.2L4.3 9.3L3 9.3Z" fill="#151515"/></svg></div>
<div class="cbx" style="left:31px;top:445px"></div>
<div class="cbx" style="left:49px;top:445px"><svg width="10" height="10" style="position:absolute;left:0px;top:0px"><path d="M1.3 6.2L3.2 5.6L4.2 7.3L8.8 2.2L9.8 3.2L4.3 9.3L3 9.3Z" fill="#151515"/></svg></div>
<div class="cbx" style="left:64px;top:445px"></div>
<span class="td" style="left:79px;top:445px;letter-spacing:-0.114px;">Out</span>
<span class="td" style="left:154px;top:445px;letter-spacing:0.163px;">Rent</span>
<span class="td" style="left:199px;top:445px;letter-spacing:-0.044px;">JBL FLIP</span>
<span class="td" style="left:304px;top:445px;letter-spacing:-0.044px;">JBL FLIP</span>
<span class="td" style="left:559px;top:445px;letter-spacing:0.326px;">1d</span>
<span class="td" style="left:613px;width:28px;top:445px;text-align:right;letter-spacing:0.161px;">7.00</span>
<span class="td" style="left:643px;width:28px;top:445px;text-align:right;letter-spacing:0.326px;">1</span>
<span class="td" style="left:673px;width:58px;top:445px;text-align:right;letter-spacing:0.216px;">200.00</span>
<span class="td" style="left:733px;width:58px;top:445px;text-align:right;letter-spacing:0.216px;">200.00</span>
<span class="td" style="left:793px;width:73px;top:445px;text-align:right;letter-spacing:0.216px;">200.00</span>
<span class="td" style="left:868px;width:53px;top:445px;text-align:right;letter-spacing:0.161px;">0.00</span>
<span class="td" style="left:924px;top:445px;letter-spacing:0.118px;">02/06/2019 02:30 PM</span>
<span class="td" style="left:1044px;top:445px;letter-spacing:0.118px;">02/08/2019 02:30 PM</span>
<span class="td" style="left:1164px;top:445px;letter-spacing:0.334px;">D</span>
<div class="cbx" style="left:14px;top:464px"></div>
<div class="cbx" style="left:31px;top:464px"></div>
<div class="cbx" style="left:49px;top:464px"><svg width="10" height="10" style="position:absolute;left:0px;top:0px"><path d="M1.3 6.2L3.2 5.6L4.2 7.3L8.8 2.2L9.8 3.2L4.3 9.3L3 9.3Z" fill="#151515"/></svg></div>
<div class="cbx" style="left:64px;top:464px"></div>
<span class="td" style="left:79px;top:464px;letter-spacing:0.221px;">Filled</span>
<span class="td" style="left:154px;top:464px;letter-spacing:0.163px;">Rent</span>
<span class="td" style="left:199px;top:464px;letter-spacing:0.039px;">JBL LINK</span>
<span class="td" style="left:304px;top:464px;letter-spacing:0.039px;">JBL LINK</span>
<span class="td" style="left:559px;top:464px;letter-spacing:0.326px;">1d</span>
<span class="td" style="left:613px;width:28px;top:464px;text-align:right;letter-spacing:0.161px;">7.00</span>
<span class="td" style="left:643px;width:28px;top:464px;text-align:right;letter-spacing:0.326px;">4</span>
<span class="td" style="left:673px;width:58px;top:464px;text-align:right;letter-spacing:0.216px;">400.00</span>
<span class="td" style="left:733px;width:58px;top:464px;text-align:right;letter-spacing:0.216px;">400.00</span>
<span class="td" style="left:793px;width:73px;top:464px;text-align:right;letter-spacing:0.232px;">1600.00</span>
<span class="td" style="left:868px;width:53px;top:464px;text-align:right;letter-spacing:0.161px;">0.00</span>
<span class="td" style="left:924px;top:464px;letter-spacing:0.118px;">02/06/2019 02:30 PM</span>
<span class="td" style="left:1044px;top:464px;letter-spacing:0.118px;">02/08/2019 02:30 PM</span>
<span class="td" style="left:1164px;top:464px;letter-spacing:0.334px;">D</span>
<div style="left:298px;top:461px;width:259px;height:18px;border:1px solid #ff0000;box-shadow:inset 0 0 0 1px #ff4a4a"></div>
<div class="cbx" style="left:14px;top:483px"></div>
<div class="cbx" style="left:31px;top:483px"></div>
<div class="cbx" style="left:49px;top:483px"><svg width="10" height="10" style="position:absolute;left:0px;top:0px"><path d="M1.3 6.2L3.2 5.6L4.2 7.3L8.8 2.2L9.8 3.2L4.3 9.3L3 9.3Z" fill="#151515"/></svg></div>
<div class="cbx" style="left:64px;top:483px"></div>
<span class="td" style="left:79px;top:483px;letter-spacing:0.205px;">Reserved</span>
<span class="td" style="left:154px;top:483px;letter-spacing:0.163px;">Rent</span>
<span class="td" style="left:199px;top:483px;letter-spacing:-0.093px;">JBL BOOMBOX</span>
<span class="td" style="left:304px;top:483px;letter-spacing:-0.093px;">JBL BOOMBOX</span>
<span class="td" style="left:559px;top:483px;letter-spacing:0.326px;">1d</span>
<span class="td" style="left:613px;width:28px;top:483px;text-align:right;letter-spacing:0.161px;">7.00</span>
<span class="td" style="left:643px;width:28px;top:483px;text-align:right;letter-spacing:0.326px;">10</span>
<span class="td" style="left:673px;width:58px;top:483px;text-align:right;letter-spacing:0.216px;">600.00</span>
<span class="td" style="left:733px;width:58px;top:483px;text-align:right;letter-spacing:0.216px;">600.00</span>
<span class="td" style="left:793px;width:73px;top:483px;text-align:right;letter-spacing:0.232px;">6000.00</span>
<span class="td" style="left:868px;width:53px;top:483px;text-align:right;letter-spacing:0.161px;">0.00</span>
<span class="td" style="left:924px;top:483px;letter-spacing:0.118px;">02/06/2019 02:30 PM</span>
<span class="td" style="left:1044px;top:483px;letter-spacing:0.118px;">02/08/2019 02:30 PM</span>
<span class="td" style="left:1164px;top:483px;letter-spacing:0.334px;">D</span>
<div class="cbx" style="left:14px;top:502px"></div>
<div class="cbx" style="left:31px;top:502px"></div>
<div class="cbx" style="left:49px;top:502px"><svg width="10" height="10" style="position:absolute;left:0px;top:0px"><path d="M1.3 6.2L3.2 5.6L4.2 7.3L8.8 2.2L9.8 3.2L4.3 9.3L3 9.3Z" fill="#151515"/></svg></div>
<div class="cbx" style="left:64px;top:502px"></div>
<span class="td" style="left:154px;top:502px;letter-spacing:0.052px;">SubTot</span>
<span class="td" style="left:304px;top:502px;font-weight:bold;letter-spacing:-0.185px;">Sub Total</span>
<span class="td" style="left:793px;width:73px;top:502px;text-align:right;letter-spacing:0.232px;">7800.00</span>
<span class="td" style="left:868px;width:53px;top:502px;text-align:right;letter-spacing:0.161px;">0.00</span>
<div class="cbx" style="left:14px;top:521px"></div>
<div class="cbx" style="left:31px;top:521px"></div>
<div class="cbx" style="left:49px;top:521px"><svg width="10" height="10" style="position:absolute;left:0px;top:0px"><path d="M1.3 6.2L3.2 5.6L4.2 7.3L8.8 2.2L9.8 3.2L4.3 9.3L3 9.3Z" fill="#151515"/></svg></div>
<div class="cbx" style="left:64px;top:521px"></div>
<span class="td" style="left:154px;top:521px;letter-spacing:-0.144px;">SecT...</span>
<span class="td" style="left:304px;top:521px;font-weight:bold;letter-spacing:-0.103px;">Section Total</span>
<span class="td" style="left:793px;width:73px;top:521px;text-align:right;letter-spacing:0.232px;">7800.00</span>
<span class="td" style="left:868px;width:53px;top:521px;text-align:right;letter-spacing:0.161px;">0.00</span>
<div style="left:13px;top:647px;width:1160px;height:16px;background:#eee;border-top:1px solid #7c93ab;border-bottom:1px solid #7c93ab"></div>
<div style="left:14px;top:648px;width:14px;height:14px;background:#eee;border-right:1px solid #bbb"></div>
<div style="left:18px;top:651px;width:0;height:0;border-top:4px solid transparent;border-bottom:4px solid transparent;border-right:5px solid #222"></div>
<div style="left:1156px;top:648px;width:16px;height:14px;background:#eee;border:1px solid #a0a8b4;border-top-color:#fff;border-left-color:#9aa4b0"></div>
<div style="left:1163px;top:651px;width:0;height:0;border-top:4px solid transparent;border-bottom:4px solid transparent;border-left:5px solid #222"></div>
<div style="left:28px;top:647px;width:411px;height:16px;background:linear-gradient(#f0bb94,#e49a6a);border:1px solid #f6bc1a"></div>
<div style="left:231px;top:651px;width:5px;height:8px;border-left:1px solid #b98a6a;border-right:1px solid #b98a6a"></div>
<div style="left:233px;top:651px;width:1px;height:8px;background:#b98a6a"></div>
<span class="blbl" style="left:70px;top:678px;letter-spacing:0.086px;">Items</span>
<div class="fld" style="left:120px;top:673px;width:100px;height:24px"><span style="top:3px;left:-1px;font-size:14px;font-weight:bold;color:#111;letter-spacing:0.199px;">7800.00</span></div>
<span class="blbl" style="left:235px;top:678px;letter-spacing:0.222px;">Labor</span>
<div class="fld" style="left:287px;top:673px;width:100px;height:24px"><span style="top:3px;left:-1px;font-size:14px;font-weight:bold;color:#111;letter-spacing:0.000px;"></span></div>
<span class="blbl" style="left:445px;top:678px;letter-spacing:0.248px;">Sub Total</span>
<div class="fld" style="left:525px;top:673px;width:100px;height:24px"><span style="top:3px;left:-1px;font-size:14px;font-weight:bold;color:#111;letter-spacing:0.199px;">7800.00</span></div>
<span class="blbl" style="left:635px;top:678px;letter-spacing:0.292px;">Tax</span>
<div class="fld" style="left:670px;top:673px;width:100px;height:24px"><span style="top:3px;left:-1px;font-size:14px;font-weight:bold;color:#111;letter-spacing:0.000px;"></span></div>
<div style="left:813px;top:673px;width:89px;height:23px;border:1px solid #c3c3c3"></div>
<span class="blbl" style="left:841px;top:678px;letter-spacing:0.312px;">Total</span>
<div class="fld" style="left:906px;top:673px;width:100px;height:24px"><span style="top:3px;left:-1px;font-size:14px;font-weight:bold;color:#111;letter-spacing:0.199px;">7800.00</span></div>
<div style="left:9px;top:707px;width:1170px;height:24px;border-top:2px solid #828282;border-left:1px solid #8a8a8a;border-right:1px solid #b4b4b4;border-bottom:1px solid #c4c4c4;background:#fff"></div>
<svg width="0" height="0" style="position:absolute"><defs>
<radialGradient id="gglass" cx="0.4" cy="0.35" r="0.65"><stop offset="0" stop-color="#ffffff"/><stop offset="0.45" stop-color="#ccefff"/><stop offset="1" stop-color="#8cc6ec"/></radialGradient>
<linearGradient id="gcbtn" x1="0" y1="0" x2="0" y2="1"><stop offset="0" stop-color="#fafcff"/><stop offset="1" stop-color="#c3d5ea"/></linearGradient>
<symbol id="mag" viewBox="0 0 16 16"><path d="M9.3 9.6L14.2 14.5" stroke="#5a5a7a" stroke-width="3.8" stroke-linecap="round"/><path d="M9.8 10.1L14 14.3" stroke="#f5a540" stroke-width="2.1" stroke-linecap="round"/><circle cx="6" cy="6" r="4.9" fill="url(#gglass)" stroke="#66668a" stroke-width="1.4"/></symbol>
<symbol id="magg" viewBox="0 0 16 16"><path d="M9.3 9.6L14 14.3" stroke="#b8b8b8" stroke-width="3.4" stroke-linecap="round"/><path d="M9.6 9.9L13.9 14.2" stroke="#d0d0d0" stroke-width="1.8" stroke-linecap="round"/><circle cx="6" cy="6" r="4.7" fill="#e6e6e6" stroke="#bdbdbd" stroke-width="1.1"/></symbol>
</defs></svg>
<div style="left:99px;top:242px;width:255px;height:24px;background:#eee;border:1px solid #7d99b8;box-shadow:inset 0 0 0 1px #dce8f4"></div>
<div style="left:334px;top:242px;width:20px;height:24px;background:linear-gradient(#fafcff,#c3d5ea);border:1px solid #7d99b8"></div>
<div style="left:339px;top:252px;width:0;height:0;border-left:5px solid transparent;border-right:5px solid transparent;border-top:5px solid #222"></div>
<div style="left:99px;top:270px;width:255px;height:24px;background:#eee;border:1px solid #7d99b8;box-shadow:inset 0 0 0 1px #dce8f4"></div>
<div style="left:334px;top:270px;width:20px;height:24px;background:linear-gradient(#fafcff,#c3d5ea);border:1px solid #7d99b8"></div>
<div style="left:339px;top:280px;width:0;height:0;border-left:5px solid transparent;border-right:5px solid transparent;border-top:5px solid #222"></div>
<svg width="16" height="16" style="position:absolute;left:333px;top:132px"><use href="#mag"/></svg>
<svg width="16" height="16" style="position:absolute;left:333px;top:188px"><use href="#mag"/></svg>
<svg width="16" height="16" style="position:absolute;left:318px;top:245px"><use href="#mag"/></svg>
<svg width="16" height="16" style="position:absolute;left:318px;top:273px"><use href="#mag"/></svg>
<svg width="16" height="16" style="position:absolute;left:334px;top:299px"><use href="#mag"/></svg>
<svg width="16" height="16" style="position:absolute;left:562px;top:239px"><use href="#mag"/></svg>
<svg width="16" height="16" style="position:absolute;left:562px;top:268px"><use href="#mag"/></svg>
<svg width="16" height="16" style="position:absolute;left:725px;top:297px"><use href="#mag"/></svg>
<svg width="16" height="16" style="position:absolute;left:1011px;top:159px"><use href="#mag"/></svg>
<svg width="16" height="16" style="position:absolute;left:794px;top:240px"><use href="#magg"/></svg>
<svg width="16" height="16" style="position:absolute;left:794px;top:268px"><use href="#magg"/></svg>
<div class="cbx" style="left:589px;top:178px"><svg width="10" height="10" style="position:absolute;left:0px;top:0px"><path d="M1.3 6.2L3.2 5.6L4.2 7.3L8.8 2.2L9.8 3.2L4.3 9.3L3 9.3Z" fill="#151515"/></svg></div>
<div class="cbx" style="left:589px;top:201px;border-color:#b8c4d0;background:linear-gradient(135deg,#fff 25%,#f5c098 100%)"></div>
<div style="left:1136px;top:1px;width:45px;height:20px;background:#c75050"></div>
<svg width="1188" height="30" style="position:absolute;left:0;top:0"><path d="M1155 8L1163 16M1163 8L1155 16" stroke="#fff" stroke-width="1.8"/><rect x="1092" y="12.5" width="8" height="2" fill="#1a1a1a"/><rect x="1118.5" y="7.5" width="9" height="7" fill="none" stroke="#1a1a1a" stroke-width="1"/><rect x="1118" y="7" width="10" height="2" fill="#1a1a1a"/><rect x="10" y="7" width="16" height="16" fill="#c8c8c8"/><rect x="10" y="7" width="16" height="1.5" fill="#2a70c0"/><rect x="10" y="21.5" width="16" height="1.5" fill="#2a70c0"/><text x="11.5" y="19" font-family="Liberation Serif" font-size="10" fill="#222">R</text><text x="18.5" y="19.5" font-family="Liberation Serif" font-size="9" fill="#222">2</text></svg>
</div>
</body></html>
